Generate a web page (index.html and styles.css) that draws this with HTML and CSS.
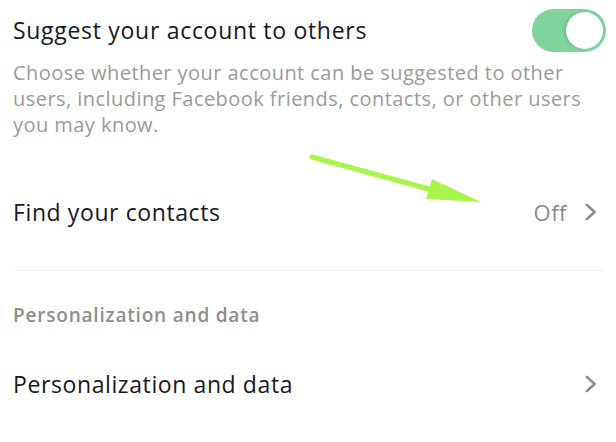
FILE: index.html
```html
<!DOCTYPE html>
<html>
<head>
<meta charset="utf-8">
<link rel="stylesheet" href="styles.css">
</head>
<body>
<div class="page">
  <div class="toggle-row">
    <div class="title">Suggest your account to others</div>
    <div class="toggle"><div class="knob"></div></div>
  </div>
  <div class="desc">Choose whether your account can be suggested to other users, including Facebook friends, contacts, or other users you may know.</div>
  <div class="row contacts">
    <div class="label">Find your contacts</div>
    <div class="right"><span class="value">Off</span>
      <svg class="chev" width="12" height="18" viewBox="0 0 12 18"><path d="M1.8 1.8 L9.6 9 L1.8 16.2" fill="none" stroke="#8a8a8a" stroke-width="2.5" stroke-linecap="round" stroke-linejoin="round"/></svg>
    </div>
  </div>
  <div class="divider"></div>
  <div class="section">Personalization and data</div>
  <div class="row pers">
    <div class="label">Personalization and data</div>
    <div class="right">
      <svg class="chev" width="12" height="18" viewBox="0 0 12 18"><path d="M1.8 1.8 L9.6 9 L1.8 16.2" fill="none" stroke="#8a8a8a" stroke-width="2.5" stroke-linecap="round" stroke-linejoin="round"/></svg>
    </div>
  </div>
  <svg class="arrow" width="616" height="442" viewBox="0 0 616 442">
    <line x1="312" y1="157" x2="436" y2="191" stroke="#a8f54c" stroke-width="5" stroke-linecap="round"/>
    <polygon points="432,179 481,202 426,199" fill="#a8f54c"/>
  </svg>
</div>
</body>
</html>
```
FILE: styles.css
```css
html, body { margin: 0; padding: 0; background: #fff; }
.page {
  position: relative;
  width: 616px;
  height: 442px;
  overflow: hidden;
  font-family: "Open Sans", "Liberation Sans", sans-serif;
  padding: 0 10px 0 13px;
  box-sizing: border-box;
}
.toggle-row {
  display: flex;
  justify-content: space-between;
  align-items: center;
  height: 60px;
}
.title { font-size: 23px; line-height: 30px; letter-spacing: 0.7px; color: #161823; }
.toggle {
  width: 74px; height: 43px;
  border-radius: 22px;
  background: #7fd49c;
  position: relative;
}
.knob {
  position: absolute;
  right: 3px; top: 3px;
  width: 37px; height: 37px;
  border-radius: 50%;
  background: #fff;
  box-shadow: -2px 0 3px rgba(0,0,0,0.12);
}
.desc {
  font-size: 20px;
  line-height: 26px;
  letter-spacing: 0.45px;
  color: #9a9a9a;
  padding-right: 20px;
}
.row {
  display: flex;
  justify-content: space-between;
  align-items: center;
}
.contacts { height: 116px; margin-top: 16px; }
.label { font-size: 23px; line-height: 30px; letter-spacing: 0.6px; color: #161823; }
.right { display: flex; align-items: center; gap: 18px; margin-right: 9px; }
.value { font-size: 22px; letter-spacing: 0.5px; color: #8a8a8a; }
.chev { display: block; }
.divider { height: 1px; background: #efefef; }
.section {
  font-size: 19px;
  line-height: 24px;
  letter-spacing: 0.8px;
  font-weight: 600;
  color: #8e8e8e;
  margin-top: 32px;
}
.pers { height: 92px; margin-top: 11px; }
.arrow { position: absolute; left: 0; top: 0; pointer-events: none; }
```
